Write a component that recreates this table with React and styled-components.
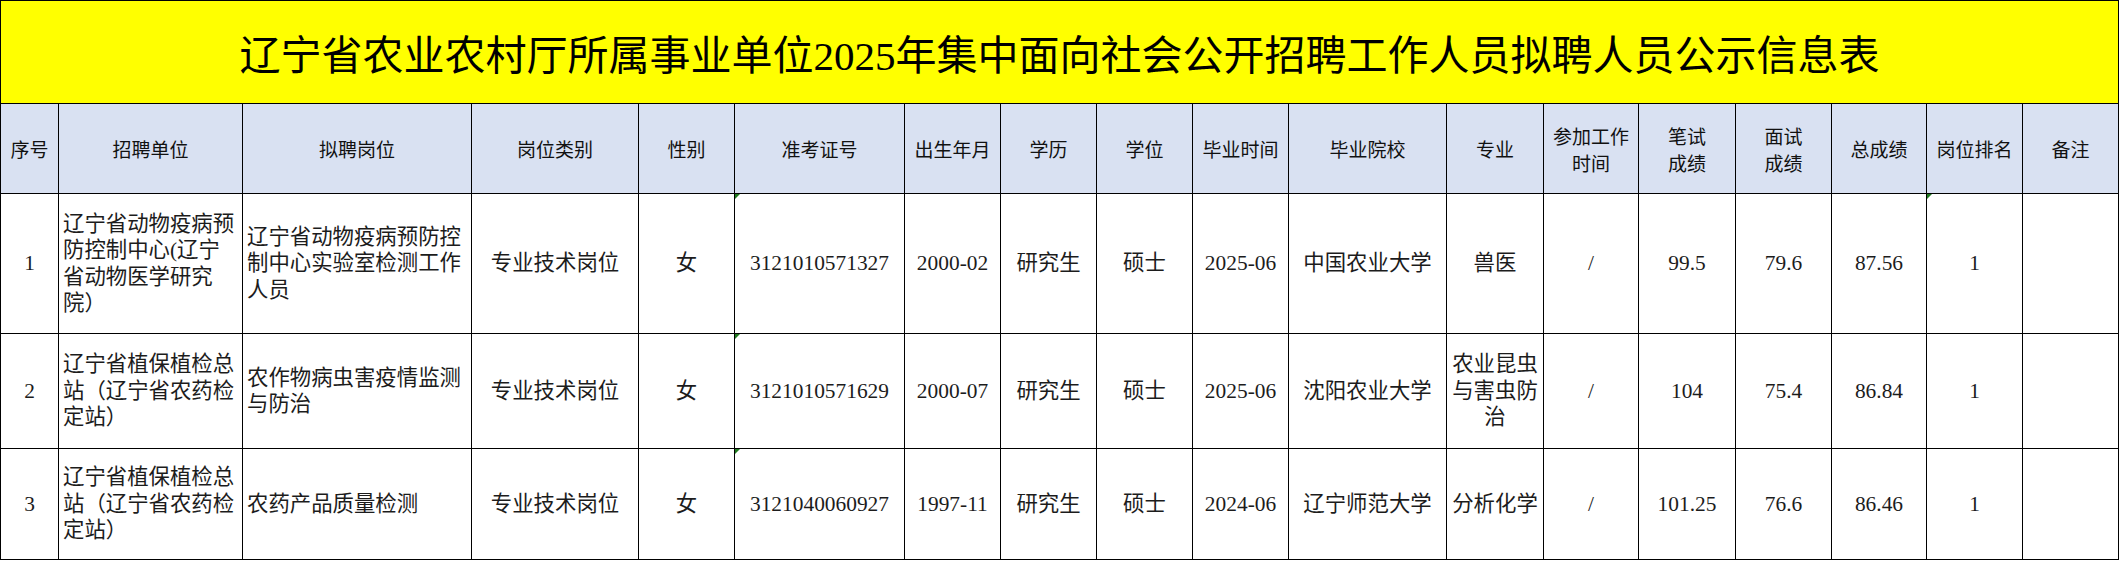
import React from "react";
import styled, { createGlobalStyle } from "styled-components";

const Global = createGlobalStyle`
  html, body { margin: 0; padding: 0; background: #ffffff; }
  #root { width: 2119px; }
`;

const Sheet = styled.table`
  width: 2119px;
  table-layout: fixed;
  border-collapse: collapse;
  border: 1px solid #000;
`;

const TitleRow = styled.tr`
  height: 103px;
`;

const TitleCell = styled.th`
  background: #ffff00;
  border: 1px solid #000;
  padding: 0;
  text-align: center;
  vertical-align: middle;
  font-family: "Liberation Serif", "Noto Sans CJK SC", serif;
  font-size: 41px;
  font-weight: 400;
  color: #000;
  letter-spacing: 0;
`;

const HeadRow = styled.tr`
  height: 90px;
`;

const HeadCell = styled.th`
  background: #d9e1f2;
  border: 1px solid #000;
  padding: 0 2px;
  text-align: center;
  vertical-align: middle;
  font-family: "Noto Sans CJK SC", "Liberation Sans", sans-serif;
  font-size: 19px;
  font-weight: 400;
  line-height: 27px;
  color: #111;
  white-space: pre-line;
`;

const BodyRow = styled.tr`
  height: ${(p) => p.$h}px;
`;

const Cell = styled.td`
  position: relative;
  border: 1px solid #000;
  padding: 0 ${(p) => (p.$left ? "2px 0 4px" : "2px")};
  padding-left: ${(p) => (p.$left ? "4px" : "2px")};
  text-align: ${(p) => (p.$left ? "left" : "center")};
  vertical-align: middle;
  font-family: "Liberation Serif", "Noto Sans CJK SC", serif;
  font-size: 21.4px;
  font-weight: 400;
  line-height: 26.5px;
  color: #1c1c1c;
  white-space: pre-line;
  overflow: hidden;

  &::before {
    content: "";
    display: ${(p) => (p.$flag ? "block" : "none")};
    position: absolute;
    left: 0;
    top: 0;
    width: 0;
    height: 0;
    border-top: 5px solid #1f7a1f;
    border-right: 5px solid transparent;
  }
`;

const widths = [58, 184, 229, 167, 96, 170, 96, 96, 96, 96, 158, 97, 95, 97, 96, 95, 96, 96];

const headers = [
  "序号", "招聘单位", "拟聘岗位", "岗位类别", "性别", "准考证号", "出生年月", "学历", "学位",
  "毕业时间", "毕业院校", "专业", "参加工作\n时间", "笔试\n成绩", "面试\n成绩", "总成绩", "岗位排名", "备注",
];

const rows = [
  {
    h: 140,
    flags: [5, 16],
    cells: [
      "1",
      "辽宁省动物疫病预\n防控制中心(辽宁\n省动物医学研究\n院）",
      "辽宁省动物疫病预防控\n制中心实验室检测工作\n人员",
      "专业技术岗位", "女", "3121010571327", "2000-02", "研究生", "硕士", "2025-06",
      "中国农业大学", "兽医", "/", "99.5", "79.6", "87.56", "1", "",
    ],
  },
  {
    h: 115,
    flags: [5],
    cells: [
      "2",
      "辽宁省植保植检总\n站（辽宁省农药检\n定站）",
      "农作物病虫害疫情监测\n与防治",
      "专业技术岗位", "女", "3121010571629", "2000-07", "研究生", "硕士", "2025-06",
      "沈阳农业大学", "农业昆虫\n与害虫防\n治", "/", "104", "75.4", "86.84", "1", "",
    ],
  },
  {
    h: 111,
    flags: [5],
    cells: [
      "3",
      "辽宁省植保植检总\n站（辽宁省农药检\n定站）",
      "农药产品质量检测",
      "专业技术岗位", "女", "3121040060927", "1997-11", "研究生", "硕士", "2024-06",
      "辽宁师范大学", "分析化学", "/", "101.25", "76.6", "86.46", "1", "",
    ],
  },
];

export default function App() {
  return (
    <>
      <Global />
      <Sheet>
        <colgroup>
          {widths.map((w, i) => (
            <col key={i} style={{ width: w }} />
          ))}
        </colgroup>
        <thead>
          <TitleRow>
            <TitleCell colSpan={18}>
              辽宁省农业农村厅所属事业单位2025年集中面向社会公开招聘工作人员拟聘人员公示信息表
            </TitleCell>
          </TitleRow>
          <HeadRow>
            {headers.map((h, i) => (
              <HeadCell key={i}>{h}</HeadCell>
            ))}
          </HeadRow>
        </thead>
        <tbody>
          {rows.map((r, ri) => (
            <BodyRow key={ri} $h={r.h}>
              {r.cells.map((c, ci) => (
                <Cell key={ci} $left={ci === 1 || ci === 2} $flag={r.flags.includes(ci)}>
                  {c}
                </Cell>
              ))}
            </BodyRow>
          ))}
        </tbody>
      </Sheet>
    </>
  );
}
